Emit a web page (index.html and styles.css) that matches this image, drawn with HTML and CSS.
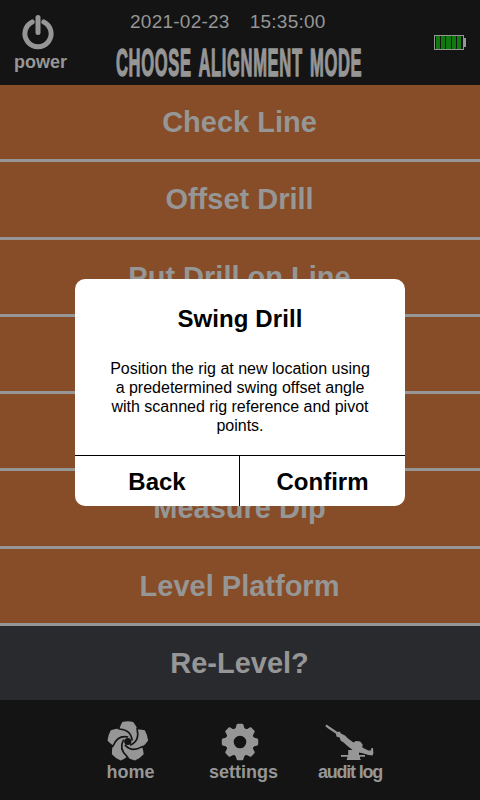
FILE: index.html
```html
<!DOCTYPE html>
<html lang="en">
<head>
<meta charset="utf-8">
<title>Choose Alignment Mode</title>
<link rel="stylesheet" href="styles.css">
</head>
<body>
<div class="screen">
  <header class="header">
    <div class="power">
      <svg class="power-icon" width="34" height="38" viewBox="0 0 34 38" fill="none" stroke="#969696" stroke-width="5" stroke-linecap="round">
        <path d="M11.2 9.9A13.1 13.1 0 1 0 22.8 9.9"/>
        <path d="M17 5.5V20.5"/>
      </svg>
      <span class="label">power</span>
    </div>
    <div class="heading">
      <div class="clock"><span>2021-02-23</span><span>15:35:00</span></div>
      <h1 class="title">CHOOSE ALIGNMENT MODE</h1>
    </div>
    <div class="battery">
      <div class="cells"><i></i><i></i><i></i><i></i><i></i></div>
      <div class="nub"></div>
    </div>
  </header>
  <main class="modes">
    <div class="mode">Check Line</div>
    <div class="mode">Offset Drill</div>
    <div class="mode">Put Drill on Line</div>
    <div class="mode"></div>
    <div class="mode"></div>
    <div class="mode">Measure Dip</div>
    <div class="mode">Level Platform</div>
    <div class="mode relevel">Re-Level?</div>
  </main>
  <footer class="footer">
    <div class="nav home">
      <svg width="42" height="42" viewBox="-20.8 -20.5 42 42">
        <defs>
          <path id="petal" fill="#969696" d="M-8.4-12.7Q-7.4-16.5-5.4-19.6Q0-20.8 5.4-19.6Q8.8-15.5 10-11.2L7 0L0 0Z"/>
          <path id="vane" fill="none" stroke="#141414" stroke-width="1.6" d="M-10-13L-8-12.5C-2-12 3.6-8.6 4.4-1"/>
        </defs>
        <use href="#petal"/>
        <use href="#petal" transform="rotate(72)"/>
        <use href="#petal" transform="rotate(144)"/>
        <use href="#petal" transform="rotate(216)"/>
        <use href="#petal" transform="rotate(288)"/>
        <use href="#vane"/>
        <use href="#vane" transform="rotate(72)"/>
        <use href="#vane" transform="rotate(144)"/>
        <use href="#vane" transform="rotate(216)"/>
        <use href="#vane" transform="rotate(288)"/>
        <circle r="3.6" fill="#141414"/>
      </svg>
      <span class="label">home</span>
    </div>
    <div class="nav settings">
      <svg width="42" height="42" viewBox="-21 -21 42 42" fill="#969696">
        <defs><path id="tooth" d="M-5.4-12.5Q-4-14-3.4-17.2Q-3.1-18.2-2.2-18.2H2.2Q3.1-18.2 3.4-17.2Q4-14 5.4-12.5Z"/></defs>
        <circle r="10.3" fill="none" stroke="#969696" stroke-width="8"/>
        <use href="#tooth"/>
        <use href="#tooth" transform="rotate(45)"/>
        <use href="#tooth" transform="rotate(90)"/>
        <use href="#tooth" transform="rotate(135)"/>
        <use href="#tooth" transform="rotate(180)"/>
        <use href="#tooth" transform="rotate(225)"/>
        <use href="#tooth" transform="rotate(270)"/>
        <use href="#tooth" transform="rotate(315)"/>
      </svg>
      <span class="label">settings</span>
    </div>
    <div class="nav audit">
      <svg width="52" height="42" viewBox="0 0 52 42" fill="#969696">
        <path d="M.2 5L1.6 3.6L3.6 5L12.5 11L14.5 10.4L16 12.6L20 14.6L23 17.4L28.4 21.4L31 20L35.2 20.6L37.6 23.4L37.4 26.4L43.3 29.6L45.8 29.6L46.4 27L48 27L48.4 32.6L47.4 34.6L43.6 34L37.6 32.2L34 31.6V34H40V35.8H35V37.4L36 39H21.6L22.6 35.8H16V34H23.2V29H27.6L23 25.4L18.6 21.4L15.8 19.8L14.6 16.4L11.4 15.4L11 12.8L2.4 7Z"/>
      </svg>
      <span class="label">audit log</span>
    </div>
  </footer>
  <div class="dialog" role="dialog">
    <div class="dialog-body">
      <h2>Swing Drill</h2>
      <p>Position the rig at new location using a predetermined swing offset angle with scanned rig reference and pivot points.</p>
    </div>
    <div class="actions">
      <div class="action">Back</div>
      <div class="action">Confirm</div>
    </div>
  </div>
</div>
</body>
</html>
```
FILE: styles.css
```css
* { box-sizing: border-box; }
body {
  margin: 0;
  font-family: "Liberation Sans", Arial, sans-serif;
  color: #969696;
  background: #141414;
}
svg { display: block; }
.screen {
  position: relative;
  width: 480px;
  height: 800px;
  display: flex;
  flex-direction: column;
  overflow: hidden;
}
.header {
  height: 85px;
  display: grid;
  grid-template-columns: 110px 260px 1fr;
}
.label {
  font-size: 18px;
  line-height: 20px;
  font-weight: bold;
  white-space: nowrap;
}
.power {
  display: flex;
  flex-direction: column;
  align-items: center;
  width: 81px;
  padding-top: 12px;
}
.power-icon { margin-left: -5px; }
.power .label { margin-top: 2px; }
.clock {
  display: flex;
  gap: 20px;
  padding: 11px 0 0 20px;
  font-size: 19px;
  line-height: 22px;
  letter-spacing: 0.25px;
}
.title {
  width: 590px;
  margin: 10px 0 0 6px;
  font-size: 39px;
  line-height: 40px;
  font-weight: bold;
  letter-spacing: 1.5px;
  word-spacing: 5px;
  white-space: nowrap;
  -webkit-text-stroke: 1.4px #969696;
  transform: scaleX(0.425);
  transform-origin: 0 50%;
}
.battery {
  display: flex;
  align-items: center;
  padding-left: 64px;
}
.cells {
  display: flex;
  gap: 1px;
  width: 30px;
  height: 15px;
  padding: 0 2px 0 1px;
  border: 1px solid #969696;
}
.cells i { flex: 1; background: #107a10; }
.nub { width: 2px; height: 9px; background: #969696; }
.modes {
  height: 615px;
  display: grid;
  grid-template-rows: repeat(8, 1fr);
  gap: 3px;
  background: #969696;
}
.mode {
  display: flex;
  align-items: center;
  justify-content: center;
  padding: 1px 1px 0 0;
  background: #874d28;
  font-size: 29px;
  font-weight: bold;
}
.relevel { background: #292a2e; }
.footer {
  height: 100px;
  display: flex;
  padding: 21px 0 0 100px;
}
.nav {
  display: flex;
  flex-direction: column;
  align-items: center;
}
.nav .label { margin-top: -1px; }
.home { width: 61px; }
.home svg { margin-left: -6px; }
.settings { width: 165px; }
.settings svg { margin-left: -8px; }
.audit { width: 50px; }
.audit .label { margin-left: -2px; letter-spacing: -1.2px; }
.dialog {
  position: absolute;
  left: 75px;
  top: 279px;
  width: 330px;
  height: 227px;
  display: flex;
  flex-direction: column;
  border-radius: 10px;
  background: #fff;
  color: #000;
  overflow: hidden;
}
.dialog-body {
  flex: 1;
  padding: 26px 30px 0;
  text-align: center;
}
.dialog h2 {
  margin: 0;
  font-size: 24px;
  line-height: 28px;
  letter-spacing: 0.1px;
}
.dialog p {
  margin: 26px 0 0;
  font-size: 16px;
  line-height: 19px;
}
.actions {
  height: 51px;
  display: grid;
  grid-template-columns: 165px 165px;
  border-top: 1px solid #000;
}
.action {
  display: flex;
  align-items: center;
  justify-content: center;
  padding-top: 2px;
  font-size: 24px;
  font-weight: bold;
}
.action:first-child { border-right: 1px solid #000; }
```
